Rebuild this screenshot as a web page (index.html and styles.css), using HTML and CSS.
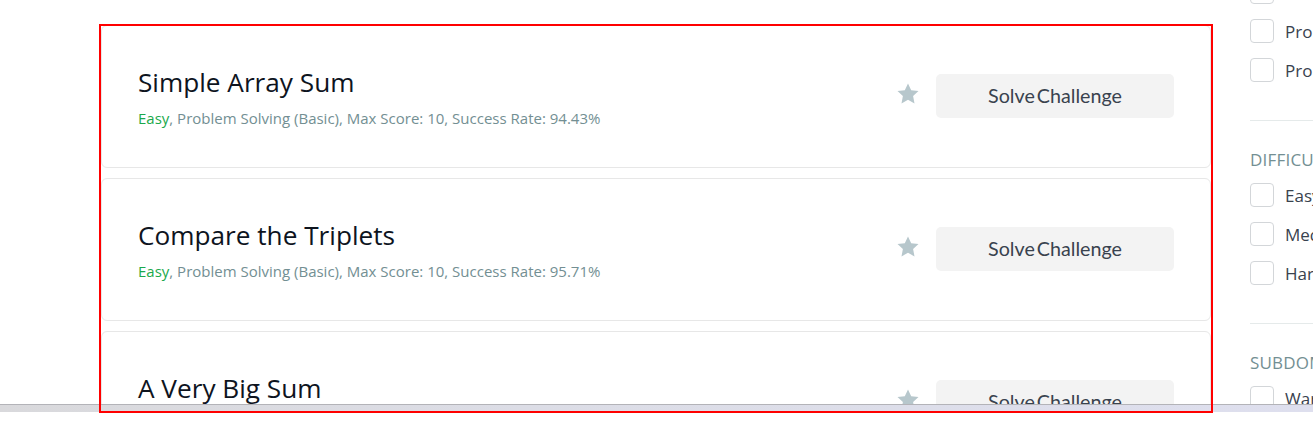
FILE: index.html
```html
<!DOCTYPE html>
<html>
<head>
<meta charset="utf-8">
<link rel="stylesheet" href="styles.css">
</head>
<body>
<div class="viewport">
  <div class="main">
    <div class="card">
      <div class="info">
        <h4 class="title">Simple Array Sum</h4>
        <div class="meta"><span class="easy">Easy</span>, Problem Solving (Basic), Max Score: 10, Success Rate: 94.43%</div>
      </div>
      <div class="actions">
        <svg class="star" viewBox="0 0 24 24" width="24" height="24"><path d="M12 1.5l3.2 6.7 7.3.9-5.4 5 1.4 7.3L12 17.8l-6.5 3.6 1.4-7.3-5.4-5 7.3-.9z" fill="#b7c7cc"/></svg>
        <button class="solve">Solve Challenge</button>
      </div>
    </div>
    <div class="card">
      <div class="info">
        <h4 class="title">Compare the Triplets</h4>
        <div class="meta"><span class="easy">Easy</span>, Problem Solving (Basic), Max Score: 10, Success Rate: 95.71%</div>
      </div>
      <div class="actions">
        <svg class="star" viewBox="0 0 24 24" width="24" height="24"><path d="M12 1.5l3.2 6.7 7.3.9-5.4 5 1.4 7.3L12 17.8l-6.5 3.6 1.4-7.3-5.4-5 7.3-.9z" fill="#b7c7cc"/></svg>
        <button class="solve">Solve Challenge</button>
      </div>
    </div>
    <div class="card">
      <div class="info">
        <h4 class="title">A Very Big Sum</h4>
        <div class="meta"><span class="easy">Easy</span>, Problem Solving (Basic), Max Score: 10, Success Rate: 98.82%</div>
      </div>
      <div class="actions">
        <svg class="star" viewBox="0 0 24 24" width="24" height="24"><path d="M12 1.5l3.2 6.7 7.3.9-5.4 5 1.4 7.3L12 17.8l-6.5 3.6 1.4-7.3-5.4-5 7.3-.9z" fill="#b7c7cc"/></svg>
        <button class="solve">Solve Challenge</button>
      </div>
    </div>
  </div>
  <aside class="sidebar">
    <div class="group first">
      <label class="opt"><span class="box"></span><span>Problem Solving (Basic)</span></label>
      <label class="opt"><span class="box"></span><span>Problem Solving (Intermediate)</span></label>
      <label class="opt"><span class="box"></span><span>Problem Solving (Advanced)</span></label>
    </div>
    <div class="group">
      <div class="heading">Difficulty</div>
      <label class="opt"><span class="box"></span><span>Easy</span></label>
      <label class="opt"><span class="box"></span><span>Medium</span></label>
      <label class="opt"><span class="box"></span><span>Hard</span></label>
    </div>
    <div class="group">
      <div class="heading">Subdomains</div>
      <label class="opt"><span class="box"></span><span>Warmup</span></label>
    </div>
  </aside>
</div>
<div class="scrollbar"></div>
<div class="highlight"></div>
</body>
</html>
```
FILE: styles.css
```css
html, body {
  margin: 0;
  padding: 0;
  background: #fff;
}
body {
  font-family: "Open Sans", "Noto Sans", sans-serif;
  color: #0e141e;
  width: 1313px;
  height: 438px;
  overflow: hidden;
  position: relative;
}
.viewport {
  height: 404px;
  overflow: hidden;
  display: flex;
  align-items: flex-start;
}
.main {
  margin-left: 101px;
  width: 1110px;
  padding-top: 25px;
  display: flex;
  flex-direction: column;
  gap: 10px;
  flex-shrink: 0;
}
.card {
  box-sizing: border-box;
  height: 143px;
  border: 1px solid #e7e7e7;
  border-radius: 6px;
  padding: 0 36px;
  display: flex;
  align-items: center;
  justify-content: space-between;
}
.title {
  margin: 0;
  font-size: 26.2px;
  line-height: 34px;
  font-weight: 400;
  color: #0e141e;
}
.meta {
  margin-top: 9px;
  font-size: 15px;
  line-height: 20px;
  color: #738f93;
}
.easy {
  color: #1ba94c;
}
.actions {
  display: flex;
  align-items: center;
  gap: 16px;
  margin-top: -1px;
}
.star {
  display: block;
  margin-top: -5px;
}
.solve {
  width: 238px;
  height: 44px;
  border: none;
  border-radius: 5px;
  background: #f3f3f3;
  font-family: Lato, "Open Sans", sans-serif;
  font-size: 19.7px;
  line-height: 44px;
  color: #39424e;
  word-spacing: -3px;
  padding: 0;
}
.sidebar {
  margin-left: 39px;
  margin-top: -20px;
  width: 200px;
  flex-shrink: 0;
}
.group {
  border-top: 1px solid #e5eaea;
  padding-top: 28px;
  padding-bottom: 23px;
}
.group.first {
  border-top: none;
  padding-top: 0;
  padding-bottom: 23px;
}
.heading {
  font-size: 17px;
  line-height: 22px;
  color: #738f93;
  text-transform: uppercase;
  letter-spacing: 0.2px;
  margin-bottom: 12px;
}
.opt {
  display: flex;
  align-items: center;
  gap: 11px;
  height: 24px;
  margin-bottom: 15px;
  font-size: 17px;
  color: #39424e;
  white-space: nowrap;
}
.box {
  box-sizing: border-box;
  width: 24px;
  height: 24px;
  border: 1px solid #d3d6d9;
  border-radius: 4px;
  flex-shrink: 0;
}
.scrollbar {
  height: 8px;
  border-top: 1px solid #b3b3b8;
  box-sizing: border-box;
  background: linear-gradient(90deg, #d9d9dc 0%, #dcdde6 40%, #dedfee 100%);
}
.highlight {
  position: absolute;
  left: 99px;
  top: 24px;
  width: 1114px;
  height: 389px;
  box-sizing: border-box;
  border: 2px solid #ff0000;
  pointer-events: none;
}
```
